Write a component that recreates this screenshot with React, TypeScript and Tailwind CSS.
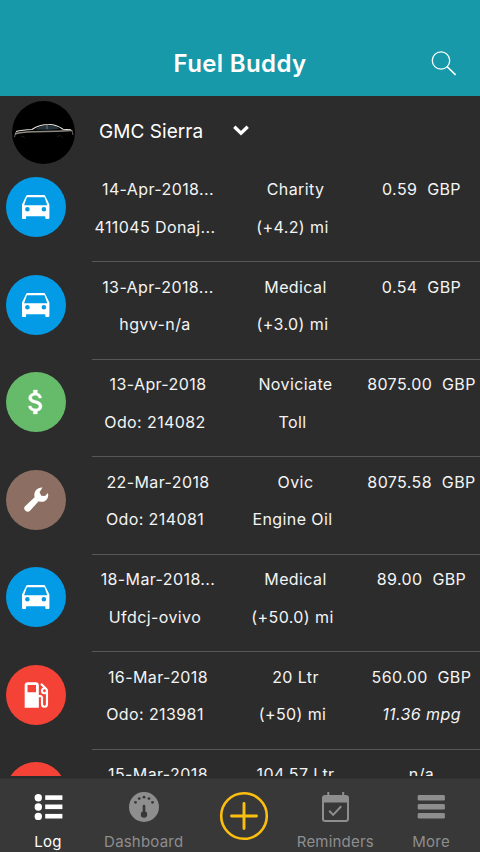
import { MdLocalGasStation } from "react-icons/md";

type Kind = "trip" | "expense" | "service" | "fuel";

interface Entry {
  kind: Kind;
  date: string;
  detail: string;
  title: string;
  note: string;
  amount: string;
  extra?: string;
}

const entries: Entry[] = [
  { kind: "trip", date: "14-Apr-2018...", detail: "411045 Donaj...", title: "Charity", note: "(+4.2) mi", amount: "0.59  GBP" },
  { kind: "trip", date: "13-Apr-2018...", detail: "hgvv-n/a", title: "Medical", note: "(+3.0) mi", amount: "0.54  GBP" },
  { kind: "expense", date: "13-Apr-2018", detail: "Odo: 214082", title: "Noviciate", note: "Toll", amount: "8075.00  GBP" },
  { kind: "service", date: "22-Mar-2018", detail: "Odo: 214081", title: "Ovic", note: "Engine Oil", amount: "8075.58  GBP" },
  { kind: "trip", date: "18-Mar-2018...", detail: "Ufdcj-ovivo", title: "Medical", note: "(+50.0) mi", amount: "89.00  GBP" },
  { kind: "fuel", date: "16-Mar-2018", detail: "Odo: 213981", title: "20 Ltr", note: "(+50) mi", amount: "560.00  GBP", extra: "11.36 mpg" },
];

const badgeColor: Record<Kind, string> = {
  trip: "bg-[#039be5]",
  expense: "bg-[#66bb6a]",
  service: "bg-[#8d6e63]",
  fuel: "bg-[#f44336]",
};

function BadgeIcon({ kind }: { kind: Kind }) {
  if (kind === "trip")
    return (
      <svg viewBox="0 0 27.4 24" className="h-6 w-[27.4px]" fill="currentColor" fillRule="evenodd">
        <path d="M3.9 1.4Q4.4 0 5.8 0H21.6Q23 0 23.5 1.4L27.4 9.6V23Q27.4 24 26.4 24H24.3Q23.3 24 23.3 23V21.3H4.1V23Q4.1 24 3.1 24H1Q0 24 0 23V9.6ZM4.9 2.3L2.1 10.3H25.3L22.5 2.3ZM5.4 12A2.3 2.3 0 1 0 5.4 16.6A2.3 2.3 0 1 0 5.4 12M21.9 12A2.3 2.3 0 1 0 21.9 16.6A2.3 2.3 0 1 0 21.9 12" />
      </svg>
    );
  if (kind === "expense")
    return (
      <svg viewBox="0 0 24 24" className="size-8" fill="currentColor" stroke="currentColor" strokeWidth="0.25">
        <path d="M11.8 10.9c-2.27-.59-3-1.2-3-2.15 0-1.09 1.01-1.85 2.7-1.85 1.78 0 2.44.85 2.5 2.1h2.21c-.07-1.72-1.12-3.3-3.21-3.81V3h-3v2.16c-1.94.42-3.5 1.68-3.5 3.61 0 2.31 1.91 3.46 4.7 4.13 2.5.6 3 1.48 3 2.41 0 .69-.49 1.79-2.7 1.79-2.06 0-2.87-.92-2.98-2.1h-2.2c.12 2.19 1.76 3.42 3.68 3.83V21h3v-2.15c1.95-.37 3.5-1.5 3.5-3.55 0-2.84-2.43-3.81-4.7-4.4z" />
      </svg>
    );
  if (kind === "service")
    return (
      <svg viewBox="0 0 25 25" className="size-[25px]" fill="currentColor">
        <path d="M18.5.6L15.5 5.2L17.3 8.8L21 9L23.9 5.9C25.2 10.5 22.5 14.5 18 14.8Q15.8 14.9 14.6 14.3L5.8 24Q3.8 25.6 1.8 24Q-.8 21.8.8 19.5L10.6 10.2C9.4 5.5 12.7.1 18.5.6Z" />
      </svg>
    );
  return <MdLocalGasStation className="size-[34px]" />;
}

function LogRow({ entry }: { entry: Entry }) {
  return (
    <div className="flex h-[97.5px] shrink-0 text-[16px] leading-[37.5px] tracking-[0.4px] whitespace-pre text-[#f4f4f4]">
      <div className="w-[92px] shrink-0 pt-[12.5px] pl-1.5">
        <div className={`flex size-[60px] items-center justify-center rounded-full text-white ${badgeColor[entry.kind]}`}>
          <BadgeIcon kind={entry.kind} />
        </div>
      </div>
      <div className="flex grow border-b border-[#575757] pt-[6.75px] text-center">
        <div className="w-[132px]">
          <p>{entry.date}</p>
          <p className="pr-1.5">{entry.detail}</p>
        </div>
        <div className="w-[143px]">
          <p>{entry.title}</p>
          <p className="pr-1.5">{entry.note}</p>
        </div>
        <div className="w-[109px]">
          <p>{entry.amount}</p>
          <p className="italic">{entry.extra}</p>
        </div>
      </div>
    </div>
  );
}

// The row that the tab bar cuts off: only its first line is within reach.
function PartialRow() {
  return (
    <div className="flex h-[26.5px] shrink-0 overflow-hidden text-[16px] leading-[37.5px] tracking-[0.4px] text-[#f4f4f4]">
      <div className="w-[92px] shrink-0 pt-[12.5px] pl-1.5">
        <div className="size-[60px] rounded-full bg-[#f44336]" />
      </div>
      <div className="flex grow pt-[6.75px] text-center">
        <p className="w-[132px]">15-Mar-2018</p>
        <p className="w-[143px]">104.57 Ltr</p>
        <p className="w-[109px]">n/a</p>
      </div>
    </div>
  );
}

function CarPhoto() {
  return (
    <svg viewBox="0 0 63 63" className="size-[63px] rounded-full bg-black" fill="none">
      <path d="M23 28.5 Q28 24.6 35 24.3 L42 24.6 Q45 25.5 47 28 L37 28.7Z" fill="#25333a" />
      <path d="M4 30.5 Q10 28.9 20 28.5 Q27 23.5 37 23.5 Q44 23.3 51 28.2 L59 28.8" stroke="#e5e2dc" strokeWidth="1.1" />
      <path d="M3 33 Q9 31 21 30.8 L45 30.2 L60 29.6" stroke="#8c8880" strokeWidth="1.5" />
      <path d="M4 31 L2.5 36 M60 29 L61 34 M35 24 L35 28" stroke="#aaa69f" strokeWidth=".6" />
      <path d="M9 36 Q11 34 13 37 M45 36 Q49 33 51 37" stroke="#222222" strokeWidth=".8" />
    </svg>
  );
}

function TabIcon({ name }: { name: string }) {
  if (name === "Log")
    return (
      <svg viewBox="0 0 30 30" className="size-[30px]" fill="currentColor">
        {[5.8, 15, 24.4].map((y) => (
          <g key={y}>
            <circle cx="5.3" cy={y} r="3.7" />
            <rect x="12.2" y={y - 2.5} width="17.2" height="4.6" />
          </g>
        ))}
      </svg>
    );
  if (name === "Dashboard")
    return (
      <svg viewBox="0 0 30 30" className="size-[30px]">
        <circle cx="15" cy="15" r="15" fill="currentColor" />
        <g fill="#383838">
          <circle cx="6.5" cy="10.3" r="1.4" />
          <circle cx="10.2" cy="6.6" r="1.4" />
          <circle cx="15" cy="5.2" r="1.4" />
          <circle cx="20" cy="6.6" r="1.4" />
          <circle cx="23.5" cy="10.3" r="1.4" />
          <circle cx="15" cy="22.5" r="3.2" />
          <rect x="13.7" y="12.8" width="2.6" height="9" rx="1.3" />
        </g>
      </svg>
    );
  if (name === "Reminders")
    return (
      <svg viewBox="0 0 30 30" className="size-[30px]" fill="none" stroke="currentColor">
        <path d="M8.3 0v5M23.2 0v5" strokeWidth="2" />
        <rect x="3" y="4" width="25" height="25" rx="2.2" strokeWidth="2" />
        <path d="M3 4h25v6.5H3z" fill="currentColor" stroke="none" />
        <path d="M9.2 18.7l4 4.2 8-8.6" strokeWidth="2" />
      </svg>
    );
  return (
    <svg viewBox="0 0 30 30" className="size-[30px]" fill="currentColor">
      <rect x="1.7" y="3" width="27.2" height="5.6" rx="1.4" />
      <rect x="1.7" y="12" width="27.2" height="5.6" rx="1.4" />
      <rect x="1.7" y="21" width="27.2" height="5.6" rx="1.4" />
    </svg>
  );
}

function Tab({ name, active }: { name: string; active?: boolean }) {
  return (
    <div className={`flex w-24 flex-col items-center pt-[13px] ${active ? "text-white" : "text-[#8e8e8e]"}`}>
      <TabIcon name={name} />
      <span className="mt-[9px] text-[15px] leading-[22px] tracking-[0.2px]">{name}</span>
    </div>
  );
}

export default function App() {
  return (
    <div className="flex h-[852px] w-[480px] flex-col overflow-hidden bg-[#2c2c2c] font-['Inter','Liberation_Sans',sans-serif] text-white">
      <header className="grid h-24 shrink-0 grid-cols-[1fr_auto_1fr] items-center bg-[#1799a9] pt-[31px]">
        <h1 className="col-start-2 text-[24px] leading-8 font-semibold tracking-[0.35px]">Fuel Buddy</h1>
        <svg viewBox="0 0 26 26" className="mr-[23px] size-[26px] justify-self-end" fill="none" stroke="white" strokeWidth="1.3">
          <circle cx="10" cy="9.5" r="8.7" />
          <path d="M16.2 15.7l8.4 8.2" strokeWidth="1.6" />
        </svg>
      </header>

      <div className="flex h-[68.5px] shrink-0 items-center pl-3">
        <div className="mt-1 h-[63px]"><CarPhoto /></div>
        <span className="ml-6 w-[134px] pt-[3px] text-[19px] leading-6 tracking-[0.05px]">GMC Sierra</span>
        <svg viewBox="0 0 16 11" className="mt-px h-[11px] w-4" fill="none" stroke="white" strokeWidth="3.3">
          <path d="M1.3 1.7L8 8.3l6.7-6.6" />
        </svg>
      </div>

      <main className="flex h-[611.5px] shrink-0 flex-col overflow-hidden">
        {entries.map((entry) => (
          <LogRow key={entry.date + entry.amount} entry={entry} />
        ))}
        <PartialRow />
      </main>

      <nav className="mt-[2px] flex grow border-t border-[#303030] bg-[#383838] pr-px">
        <Tab name="Log" active />
        <Tab name="Dashboard" />
        <div className="flex w-24 justify-center pt-3 pl-[9px]">
          <svg viewBox="0 0 50 50" className="size-[50px] shrink-0" fill="none" stroke="#fdbf0f">
            <circle cx="25" cy="25" r="22.8" strokeWidth="2.6" />
            <path d="M25 12.5v25M12.5 25h25" strokeWidth="2.9" strokeLinecap="round" />
          </svg>
        </div>
        <Tab name="Reminders" />
        <Tab name="More" />
      </nav>
    </div>
  );
}
